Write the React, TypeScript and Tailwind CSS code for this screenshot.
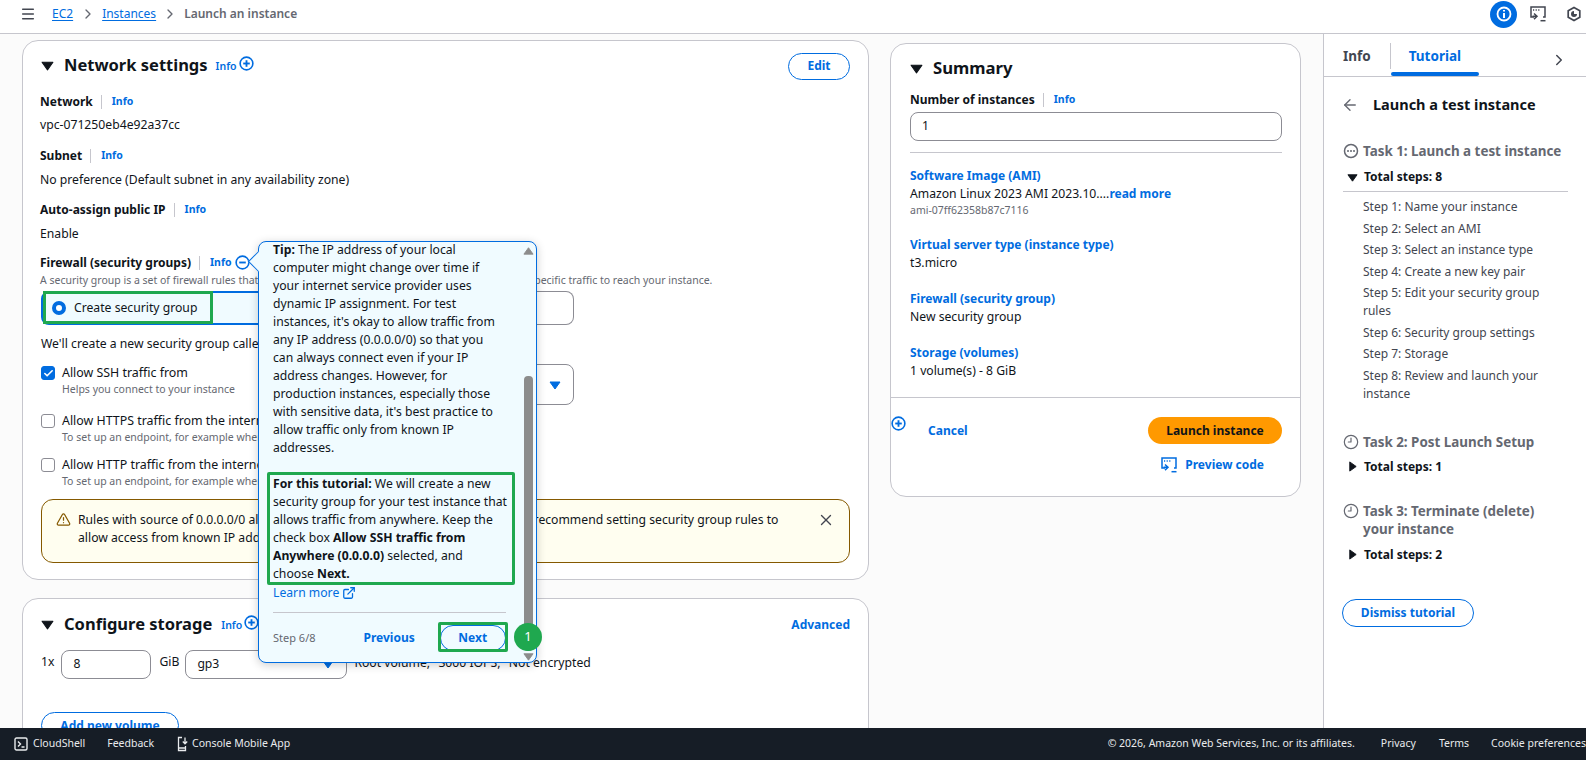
import { ChevronRight, Menu, ArrowLeft, X, Check, AlertTriangle, ExternalLink, Clock3 } from 'lucide-react'

const link = 'text-[#006ce0]'

function Caret({ dir = 'down', size = 12 }: { dir?: 'down' | 'right' | 'up'; size?: number }) {
  const pts = dir === 'down' ? '1,3 11,3 6,10' : dir === 'right' ? '3,1 10,6 3,11' : '1,10 11,10 6,3'
  return (
    <svg width={size} height={size} viewBox="0 0 12 12" className="shrink-0">
      <polygon points={pts} fill="currentColor" stroke="currentColor" strokeLinejoin="round" />
    </svg>
  )
}

function CircleSign({ minus }: { minus?: boolean }) {
  return (
    <svg width="15" height="15" viewBox="0 0 16 16" className="shrink-0 text-[#006ce0]" fill="none" stroke="currentColor">
      <circle cx="8" cy="8" r="6.8" strokeWidth="1.7" />
      <path d="M4.5 8h7" strokeWidth="2" />
      {!minus && <path d="M8 4.5v7" strokeWidth="2" />}
    </svg>
  )
}

function CodeIcon({ className }: { className?: string }) {
  return (
    <svg width="16" height="16" viewBox="0 0 16 16" fill="none" stroke="currentColor" strokeWidth="1.5" className={className}>
      <path d="M4 11H1V1h14v10h-2" />
      <path d="M3 4h1.2M5.6 4h1.2M8.2 4h1.2" strokeWidth="1.5" />
      <path d="M4 7.5l3 2.8-3 2.8M6.5 10.3H2.5" />
      <path d="M10.5 14.7h5" />
    </svg>
  )
}

function Label({ text }: { text: string }) {
  return (
    <div className="flex items-center h-[18px] text-[12px] font-bold">
      <span>{text}</span>
      <span className="ml-[8px] h-[14px] w-px bg-[#c6c6cd]" />
      <span className={`ml-[10px] text-[10.5px] ${link}`}>Info</span>
    </div>
  )
}

function CheckRow({ on, title, sub, className }: { on?: boolean; title: string; sub: string; className?: string }) {
  return (
    <div className={`flex gap-[7px] ${className}`}>
      <span
        className={`mt-[2px] flex h-[14px] w-[14px] shrink-0 items-center justify-center rounded-[3px] border ${
          on ? 'border-[#006ce0] bg-[#006ce0]' : 'border-[#8c8c94] bg-white'
        }`}
      >
        {on && <Check size={11} strokeWidth={3.5} className="text-white" />}
      </span>
      <div>
        <p className="h-[18px] leading-[18px] text-[12.4px] whitespace-nowrap">{title}</p>
        <p className="h-[15px] leading-[15px] text-[10.5px] text-[#656871] whitespace-nowrap">{sub}</p>
      </div>
    </div>
  )
}

function SummaryItem({ title, children, className }: { title: string; children: React.ReactNode; className?: string }) {
  return (
    <div className={`text-[12.2px] leading-[18px] ${className}`}>
      <p className={`text-[12px] font-bold ${link}`}>{title}</p>
      {children}
    </div>
  )
}

function TopBar() {
  return (
    <header className="flex h-[34px] shrink-0 items-center border-b border-[#c6c6cd] bg-white pb-[5px] pl-[20px] pr-[4px] text-[12px]">
      <Menu size={16} strokeWidth={2.2} className="text-[#424650]" />
      <a className={`ml-[16px] underline underline-offset-2 ${link}`}>EC2</a>
      <ChevronRight size={16} className="ml-[7px] mr-[6px] text-[#656871]" />
      <a className={`underline underline-offset-2 ${link}`}>Instances</a>
      <ChevronRight size={16} className="mx-[6px] text-[#656871]" />
      <span className="font-semibold text-[#656871]">Launch an instance</span>
      <div className="ml-auto flex items-center">
        <span className="flex h-[27px] w-[27px] items-center justify-center rounded-full bg-[#006ce0]">
          <svg width="16" height="16" viewBox="0 0 16 16" fill="none" stroke="white" strokeWidth="2">
            <circle cx="8" cy="8" r="6.5" strokeWidth="1.8" />
            <path d="M8 7v5M8 4v1.6" />
          </svg>
        </span>
        <CodeIcon className="ml-[13px] text-[#424650]" />
        <svg width="16" height="16" viewBox="0 0 16 16" fill="none" stroke="#424650" strokeWidth="1.7" className="ml-[20px]">
          <path d="M8 1.5l5.8 3.2v6.6L8 14.5l-5.8-3.2V4.7z" />
          <path d="M8 5a3 3 0 1 0 3 3H8z" fill="#424650" stroke="none" />
        </svg>
      </div>
    </header>
  )
}

function NetworkCard() {
  return (
    <section className="relative h-[540px] rounded-[16px] border border-[#c6c6cd] bg-white pl-[18px] pr-[18px] pt-[11px] text-[12.2px]">
      <div className="flex h-[26px] items-center">
        <Caret size={13} />
        <h2 className="ml-[10px] mt-[1px] text-[16.5px] font-bold">Network settings</h2>
        <span className={`ml-[8px] mt-[4px] text-[10.5px] font-semibold ${link}`}>Info</span>
        <span className="ml-[2px] -mt-[3px]"><CircleSign /></span>
        <button className={`ml-auto mt-[2px] h-[27px] w-[62px] rounded-full border border-[#006ce0] text-[12px] font-bold ${link}`}>Edit</button>
      </div>
      <div className="-ml-[1px]">
        <div className="mt-[15px]"><Label text="Network" /></div>
        <p className="mt-[5px] leading-[18px]">vpc-071250eb4e92a37cc</p>
        <div className="mt-[13px]"><Label text="Subnet" /></div>
        <p className="mt-[6px] leading-[18px]">No preference (Default subnet in any availability zone)</p>
        <div className="mt-[12px]"><Label text="Auto-assign public IP" /></div>
        <p className="mt-[6px] leading-[18px]">Enable</p>
        <div className="mt-[11px] flex h-[18px] items-center text-[12px] font-bold">
          <span>Firewall (security groups)</span>
          <span className="ml-[8px] h-[14px] w-px bg-[#c6c6cd]" />
          <span className={`ml-[10px] text-[10.5px] ${link}`}>Info</span>
          <span className="ml-[3px] -mt-[2px]"><CircleSign minus /></span>
        </div>
        <p className="h-[16px] leading-[16px] text-[10.5px] text-[#656871] whitespace-nowrap">
          A security group is a set of firewall rules that control the traffic for your instance. Add rules to allow specific traffic to reach your instance.
        </p>
      </div>
      <div className="mt-[3px] flex h-[34px] w-[533px]">
        <div className="flex w-[266px] items-center rounded-l-[8px] border-2 border-[#006ce0] bg-[#f0fbff] pl-[9px]">
          <span className="h-[14px] w-[14px] rounded-full border-[4px] border-[#006ce0] bg-white" />
          <span className="ml-[8px]">Create security group</span>
        </div>
        <div className="flex-1 rounded-r-[8px] border border-l-0 border-[#8c8c94]" />
      </div>
      <p className="mt-[10px] leading-[18px] whitespace-nowrap">We'll create a new security group called 'launch-wizard-1' with the following rules:</p>
      <div className="relative">
        <CheckRow on title="Allow SSH traffic from" sub="Helps you connect to your instance" className="mt-[11px]" />
        <div className="absolute left-[260px] top-[0px] flex h-[41px] w-[273px] items-center justify-end rounded-[8px] border border-[#8c8c94] bg-white pr-[12px] text-[#006ce0]">
          <Caret />
        </div>
      </div>
      <CheckRow title="Allow HTTPS traffic from the internet" sub="To set up an endpoint, for example when creating a web server" className="mt-[15px]" />
      <CheckRow title="Allow HTTP traffic from the internet" sub="To set up an endpoint, for example when creating a web server" className="mt-[11px]" />
      <div className="relative mt-[10px] h-[64px] rounded-[12px] border border-[#855900] bg-[#fffef0] pl-[14px] pr-[40px] pt-[11px]">
        <div className="flex gap-[7px]">
          <AlertTriangle size={15} strokeWidth={2} className="mt-[1px] shrink-0 text-[#855900]" />
          <p className="leading-[18px]">
            Rules with source of 0.0.0.0/0 allow all IP addresses to access your instance. We recommend setting security group rules to<br />
            allow access from known IP addresses only.
          </p>
        </div>
        <X size={18} strokeWidth={1.8} className="absolute right-[14px] top-[11px] text-[#424650]" />
      </div>
    </section>
  )
}

function StorageCard() {
  return (
    <section className="mt-[18px] h-[200px] rounded-[16px] border border-[#c6c6cd] bg-white pl-[18px] pr-[18px] pt-[12px] text-[12.2px]">
      <div className="flex h-[26px] items-center">
        <Caret size={13} />
        <h2 className="ml-[10px] text-[16.5px] font-bold">Configure storage</h2>
        <span className={`ml-[9px] mt-[3px] text-[10.5px] font-semibold ${link}`}>Info</span>
        <span className="ml-[2px] -mt-[3px]"><CircleSign /></span>
        <span className={`ml-auto mt-[1px] text-[12px] font-bold ${link}`}>Advanced</span>
      </div>
      <div className="mt-[12px] flex h-[30px] items-center">
        <span className="-mt-[3px]">1x</span>
        <div className="ml-[7px] flex h-[29px] w-[90px] items-center rounded-[8px] border border-[#8c8c94] pl-[11px]">8</div>
        <span className="ml-[8px] -mt-[3px]">GiB</span>
        <div className="relative ml-[6px] flex h-[29px] w-[162px] items-center rounded-[8px] border border-[#8c8c94] pl-[11px]">
          gp3
          <span className="absolute right-[12px] text-[#006ce0]"><Caret /></span>
        </div>
        <span className="ml-[7px] -mt-[1px] whitespace-nowrap">Root volume,&nbsp; <span className="mx-[2px]">3000 IOPS,</span>&nbsp; Not encrypted</span>
      </div>
      <button className={`mt-[33px] h-[27px] w-[138px] rounded-full border border-[#006ce0] text-[12px] font-bold ${link}`}>Add new volume</button>
    </section>
  )
}

function Summary() {
  return (
    <aside className="relative mt-[3px] h-[454px] w-[411px] shrink-0 rounded-[16px] border border-[#c6c6cd] bg-white pl-[19px] pr-[18px] pt-[11px]">
      <div className="flex h-[26px] items-center">
        <Caret size={13} />
        <h2 className="ml-[10px] text-[16.7px] font-bold">Summary</h2>
      </div>
      <div className="mt-[10px]"><Label text="Number of instances" /></div>
      <div className="mt-[3px] flex h-[29px] items-center rounded-[8px] border border-[#8c8c94] pl-[11px] text-[12.2px]">1</div>
      <div className="mt-[11px] h-px bg-[#c6c6cd]" />
      <SummaryItem title="Software Image (AMI)" className="mt-[14px]">
        <p>Amazon Linux 2023 AMI 2023.10....<span className={`text-[12px] font-bold ${link}`}>read more</span></p>
        <p className="text-[10.5px] leading-[15px] text-[#656871]">ami-07ff62358b87c7116</p>
      </SummaryItem>
      <SummaryItem title="Virtual server type (instance type)" className="mt-[18px]"><p>t3.micro</p></SummaryItem>
      <SummaryItem title="Firewall (security group)" className="mt-[18px]"><p>New security group</p></SummaryItem>
      <SummaryItem title="Storage (volumes)" className="mt-[18px]"><p>1 volume(s) - 8 GiB</p></SummaryItem>
      <div className="-ml-[19px] -mr-[18px] mt-[17px] h-px bg-[#c6c6cd]" />
      <div className="absolute left-[0px] top-[372px]"><CircleSign /></div>
      <div className="mt-[19px] flex items-center justify-between pl-[18px]">
        <span className={`text-[12px] font-bold ${link}`}>Cancel</span>
        <button className="h-[27px] w-[134px] rounded-full bg-[#ff9900] text-[12px] font-bold text-[#0f141a]">Launch instance</button>
      </div>
      <div className={`mt-[12px] flex items-center justify-end gap-[8px] pr-[18px] text-[12px] font-bold ${link}`}>
        <CodeIcon />
        Preview code
      </div>
    </aside>
  )
}

const steps = [
  'Step 1: Name your instance',
  'Step 2: Select an AMI',
  'Step 3: Select an instance type',
  'Step 4: Create a new key pair',
  'Step 5: Edit your security group rules',
  'Step 6: Security group settings',
  'Step 7: Storage',
  'Step 8: Review and launch your instance',
]

function TaskHead({ text, dots }: { text: React.ReactNode; dots?: boolean }) {
  return (
    <div className="flex gap-[4px] text-[13.4px] font-bold leading-[18px] text-[#656871]">
      {dots ? (
        <svg width="16" height="16" viewBox="0 0 16 16" className="mt-[1px] shrink-0" fill="none" stroke="currentColor" strokeWidth="1.5">
          <circle cx="8" cy="8" r="6.5" />
          <path d="M5 8h.01M8 8h.01M11 8h.01" strokeWidth="2" strokeLinecap="round" />
        </svg>
      ) : (
        <Clock3 size={16} strokeWidth={1.8} className="mt-[1px] shrink-0 -scale-x-100" />
      )}
      <span>{text}</span>
    </div>
  )
}

function TotalSteps({ n, open, tight }: { n: number; open?: boolean; tight?: boolean }) {
  return (
    <div className={`ml-[4px] flex items-center gap-[6px] text-[12px] font-bold leading-[18px] ${tight ? 'mt-[7px]' : 'mt-[8px]'}`}>
      <Caret dir={open ? 'down' : 'right'} size={11} />
      Total steps: {n}
    </div>
  )
}

function RightPanel() {
  return (
    <aside className="w-[263px] shrink-0 border-l border-[#c6c6cd] bg-white">
      <div className="relative flex h-[43px] border-b border-[#c6c6cd] text-[13.5px] font-bold">
        <span className="ml-[19px] mt-[12px] text-[#424650]">Info</span>
        <span className="ml-[19px] mt-[9px] h-[26px] w-px bg-[#c6c6cd]" />
        <span className={`ml-[18px] mt-[12px] ${link}`}>Tutorial</span>
        <span className="absolute bottom-0 left-[67px] h-[4px] w-[88px] rounded-[2px] bg-[#006ce0]" />
        <ChevronRight size={18} className="absolute right-[18px] top-[17px] text-[#424650]" />
      </div>
      <div className="pl-[19px] pr-[18px]">
        <div className="mt-[18px] flex h-[20px] items-center">
          <ArrowLeft size={18} strokeWidth={1.8} className="-ml-[2px] text-[#656871]" />
          <h3 className="ml-[14px] text-[14.5px] font-bold">Launch a test instance</h3>
        </div>
        <div className="mt-[27px]"><TaskHead dots text="Task 1: Launch a test instance" /></div>
        <TotalSteps n={8} open />
        <div className="mt-[5px] h-px bg-[#c6c6cd]" />
        <ul className="mt-[6px] flex flex-col gap-[3.5px] pl-[20px] pr-[20px] text-[12px] leading-[18px] text-[#424650]">
          {steps.map(s => <li key={s}>{s}</li>)}
        </ul>
        <div className="mt-[30px]"><TaskHead text="Task 2: Post Launch Setup" /></div>
        <TotalSteps n={1} tight />
        <div className="mt-[26px]"><TaskHead text={<>Task 3: Terminate (delete)<br />your instance</>} /></div>
        <TotalSteps n={2} />
        <button className={`-ml-[1px] mt-[35px] h-[28px] w-[132px] rounded-full border border-[#006ce0] text-[12px] font-bold ${link}`}>Dismiss tutorial</button>
      </div>
    </aside>
  )
}

function Footer() {
  return (
    <footer className="flex h-[32px] shrink-0 items-center bg-[#161d26] pl-[14px] text-[10.5px] text-[#e9ebed]">
      <svg width="14" height="14" viewBox="0 0 14 14" fill="none" stroke="currentColor" strokeWidth="1.4">
        <rect x="1" y="1" width="12" height="12" rx="1.5" />
        <path d="M4 4.5L6.5 7 4 9.5M7.5 10h3" />
      </svg>
      <span className="ml-[5px]">CloudShell</span>
      <span className="ml-[22px]">Feedback</span>
      <svg width="14" height="16" viewBox="0 0 14 16" fill="none" stroke="currentColor" strokeWidth="1.3" className="ml-[22px]">
        <path d="M6 1.5H2.5v13h7V10M2.5 12h7M9 1.5v6M6.8 5.5L9 7.8l2.2-2.3" />
      </svg>
      <span className="ml-[2px]">Console Mobile App</span>
      <span className="ml-auto">© 2026, Amazon Web Services, Inc. or its affiliates.</span>
      <span className="ml-[26px]">Privacy</span>
      <span className="ml-[23px]">Terms</span>
      <span className="ml-[22px] whitespace-nowrap">Cookie preferences</span>
    </footer>
  )
}

function Popover() {
  return (
    <div className="absolute left-[258px] top-[241px] z-10 h-[422px] w-[279px] rounded-[8px] border-[1.5px] border-[#006ce0] bg-[#f0fbff] shadow-[0_2px_10px_rgba(0,0,0,0.2)]">
      <span className="absolute -left-[8px] top-[12px] h-[15px] w-[15px] rotate-45 border-b-[1.5px] border-l-[1.5px] border-[#006ce0] bg-[#f0fbff]" />
      <div className="relative h-full overflow-hidden pl-[14px] text-[12.2px] leading-[18px]">
        <div className="w-[240px]">
          <p className="-mt-[1px]">
            <b>Tip:</b> The IP address of your local<br />
            computer might change over time if<br />
            your internet service provider uses<br />
            dynamic IP assignment. For test<br />
            instances, it's okay to allow traffic from<br />
            any IP address (0.0.0.0/0) so that you<br />
            can always connect even if your IP<br />
            address changes. However, for<br />
            production instances, especially those<br />
            with sensitive data, it's best practice to<br />
            allow traffic only from known IP<br />
            addresses.
          </p>
          <p className="mt-[18px]">
            <b>For this tutorial:</b> We will create a new<br />
            security group for your test instance that<br />
            allows traffic from anywhere. Keep the<br />
            check box <b>Allow SSH traffic from</b><br />
            <b>Anywhere (0.0.0.0)</b> selected, and<br />
            choose <b>Next.</b>
          </p>
          <p className={`mt-[1px] flex items-center gap-[3px] ${link}`}>Learn more <ExternalLink size={14} strokeWidth={2.2} /></p>
          <div className="mt-[10px] h-px w-[233px] bg-[#c6c6cd]" />
          <div className="mt-[12px] flex h-[26px] items-center text-[11px] text-[#656871]">
            <span>Step 6/8</span>
            <span className={`ml-[48px] text-[12px] font-bold ${link}`}>Previous</span>
            <button className={`ml-[25px] h-[26px] w-[66px] rounded-full border border-[#006ce0] text-[12px] font-bold ${link}`}>Next</button>
          </div>
        </div>
        {/* scrollbar */}
        <div className="absolute right-[2px] top-0 flex h-full w-[12px] flex-col items-center text-[#8c8c8c]">
          <span className="mt-[3px]"><Caret dir="up" size={11} /></span>
          <span className="mt-[120px] h-[276px] w-[9px] rounded-[4px] bg-[#8c8c8c]" />
          <span className="mt-[0px]"><Caret size={11} /></span>
        </div>
      </div>
    </div>
  )
}

export default function App() {
  return (
    <div className="relative flex h-[760px] w-[1586px] flex-col overflow-hidden bg-[#fbfbfb] font-['Noto_Sans',sans-serif] text-[12px] text-[#0f141a]">
      <TopBar />
      <div className="flex min-h-0 flex-1">
        <main className="flex min-w-0 flex-1 gap-[21px] overflow-hidden pl-[22px] pr-[23px] pt-[6px]">
          <div className="w-[847px] shrink-0">
            <NetworkCard />
            <StorageCard />
          </div>
          <Summary />
        </main>
        <RightPanel />
      </div>
      <Footer />

      <Popover />
      {/* green tutorial highlights */}
      <div className="pointer-events-none absolute left-[43px] top-[291px] z-20 h-[33px] w-[170px] border-[3px] border-[#1fa84f]" />
      <div className="pointer-events-none absolute left-[267px] top-[472px] z-20 h-[113px] w-[248px] rounded-[2px] border-[3px] border-[#1fa84f]" />
      <div className="pointer-events-none absolute left-[438px] top-[622px] z-20 h-[30px] w-[70px] rounded-[2px] border-[3px] border-[#1fa84f]" />
      <span className="absolute left-[514px] top-[623px] z-20 flex h-[28px] w-[28px] items-center justify-center rounded-full bg-[#1fa84f] text-[13px] text-white">1</span>
    </div>
  )
}
